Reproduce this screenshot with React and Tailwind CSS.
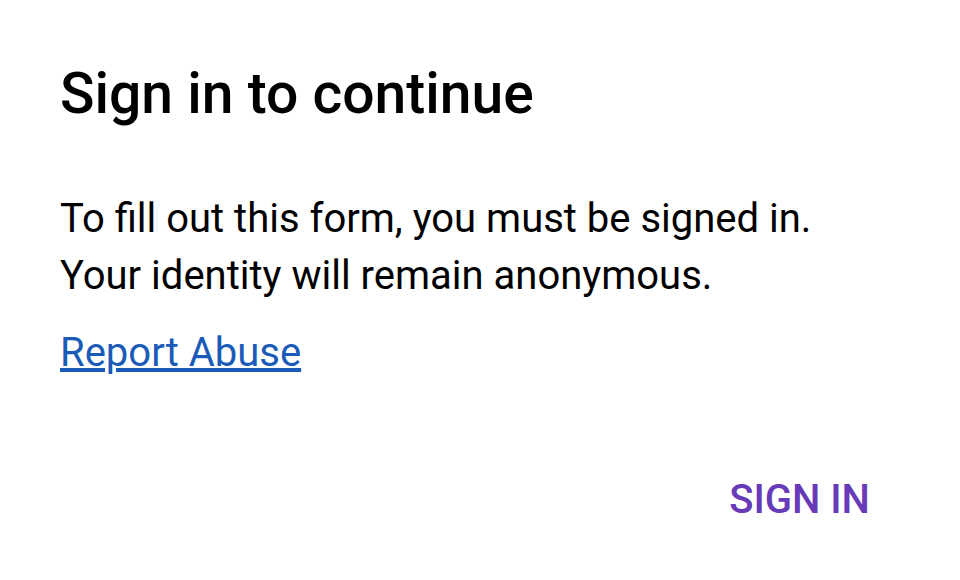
export default function App() {
  return (
    <div className="w-[960px] h-[580px] bg-white flex flex-col pl-[60px] pr-[90px]" style={{ fontFamily: 'Roboto, "Noto Sans", sans-serif' }}>
      <h1 className="mt-[58px] text-[57px] leading-[72px] font-medium text-black">Sign in to continue</h1>
      <div className="mt-[60px] text-[40px] leading-[57px] text-black">
        <p>To fill out this form, you must be signed in.</p>
        <p>Your identity will remain anonymous.</p>
      </div>
      <a href="#" className="mt-[20px] self-start text-[40px] leading-[57px] text-[#1a5bb8] underline">Report Abuse</a>
      <div className="flex justify-end mt-[94px]">
        <button className="text-[40px] leading-[50px] font-medium text-[#673ab7]">SIGN IN</button>
      </div>
    </div>
  );
}
